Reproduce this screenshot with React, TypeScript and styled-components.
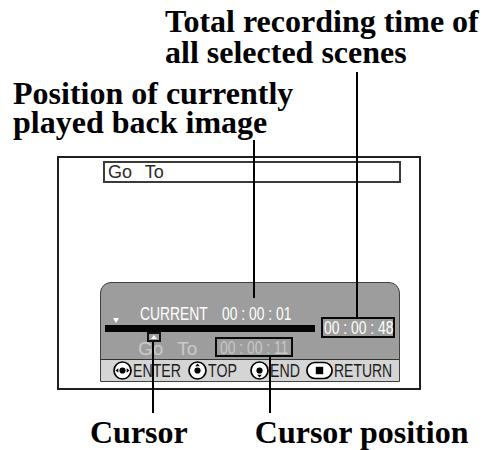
import React from "react";
import styled, { createGlobalStyle } from "styled-components";

const Global = createGlobalStyle`
  html, body { margin: 0; padding: 0; background: #ffffff; }
  body { font-family: "Liberation Sans", Arial, sans-serif; }
`;

const Page = styled.div`
  position: relative;
  width: 489px;
  height: 450px;
  overflow: hidden;
  background: #ffffff;
  padding-top: 6px;
  box-sizing: border-box;
`;

const Caption = styled.div<{ $left: number; $top: number; $lh: number }>`
  margin-left: ${(p) => p.$left}px;
  margin-top: ${(p) => p.$top}px;
  font-family: "Liberation Serif", "Times New Roman", serif;
  font-weight: bold;
  font-size: 32px;
  line-height: ${(p) => p.$lh}px;
  color: #000;
  white-space: nowrap;
`;

const Screen = styled.div`
  margin: 19px 0 0 57px;
  width: 364px;
  height: 234px;
  box-sizing: border-box;
  border: 2px solid #1e1e1e;
  display: flex;
  flex-direction: column;
  align-items: flex-start;
`;

const TitleBox = styled.div`
  margin: 3px 0 0 44px;
  width: 298px;
  height: 22px;
  box-sizing: border-box;
  border: 2px solid #3a3a3a;
  padding: 0 0 0 3px;
  font-size: 18px;
  line-height: 18px;
  color: #2a2a2a;
  word-spacing: 8px;
`;

const Panel = styled.div`
  margin: 99px 0 0 41px;
  width: 300px;
  height: 100px;
  box-sizing: border-box;
  border: 1px solid #404040;
  border-radius: 11px 11px 0 0;
  background: #9d9d9d;
  display: flex;
  flex-direction: column;
`;

const Main = styled.div`
  display: flex;
  align-items: flex-start;
  padding: 22px 0 0 4px;
  height: 54px;
  box-sizing: content-box;
`;

const Track = styled.div`
  width: 210px;
  display: flex;
  flex-direction: column;
`;

/* condensed text: the glyphs are squeezed to the width of the reference's narrow face */
const Cond = styled.span<{ $w: number; $s: number }>`
  display: inline-block;
  width: ${(p) => p.$w}px;
  white-space: pre;
  & > span {
    display: inline-block;
    transform: scaleX(${(p) => p.$s});
    transform-origin: 0 50%;
  }
`;

const InfoLine = styled.div`
  height: 20px;
  display: flex;
  align-items: flex-start;
  font-size: 18px;
  line-height: 19px;
  color: #ffffff;
`;

const Marker = styled.span`
  width: 0;
  height: 0;
  margin: 13px 0 0 8px;
  border-left: 3px solid transparent;
  border-right: 3px solid transparent;
  border-top: 5px solid #ffffff;
`;

const Gap = styled.span<{ $w: number }>`
  display: inline-block;
  width: ${(p) => p.$w}px;
`;

const Bar = styled.div`
  height: 7px;
  background: #050505;
`;

const CursorRow = styled.div`
  position: relative;
  height: 27px;
  display: flex;
  align-items: flex-start;
`;

const Cursor = styled.div`
  position: absolute;
  left: 42px;
  top: 0;
  width: 14px;
  height: 10px;
  box-sizing: border-box;
  border: 2px solid #111;
  background: #9d9d9d;
  display: flex;
  align-items: center;
  justify-content: center;
  &::after {
    content: "";
    width: 0;
    height: 0;
    border-left: 3px solid transparent;
    border-right: 3px solid transparent;
    border-bottom: 4px solid #ffffff;
  }
`;

const GoTo = styled.span`
  margin: 7px 0 0 33px;
  font-size: 19px;
  line-height: 19px;
  color: #cacaca;
  word-spacing: 9px;
  white-space: pre;
`;

const TimeBox = styled.div<{ $w: number; $h: number; $color: string; $mt: number; $ml: number }>`
  margin: ${(p) => p.$mt}px 0 0 ${(p) => p.$ml}px;
  width: ${(p) => p.$w}px;
  height: ${(p) => p.$h}px;
  box-sizing: border-box;
  border: 2px solid #0a0a0a;
  display: flex;
  align-items: center;
  justify-content: center;
  font-size: 18px;
  line-height: 18px;
  color: ${(p) => p.$color};
  padding-top: 1px;
`;

const KeyBar = styled.div`
  flex: 1;
  border-top: 1px solid #333;
  background: #d5d5d5;
  display: flex;
  align-items: center;
  padding-left: 12px;
  font-size: 19px;
  line-height: 19px;
  color: #1c1c1c;
`;

const Key = styled.div<{ $gap: number }>`
  display: flex;
  align-items: center;
  margin-left: ${(p) => p.$gap}px;
  svg { display: block; margin-right: 1px; }
`;

const Leader = styled.div<{ $x: number; $y: number; $h: number }>`
  position: absolute;
  left: ${(p) => p.$x}px;
  top: ${(p) => p.$y}px;
  width: 2px;
  height: ${(p) => p.$h}px;
  background: #000;
`;

const BottomLabels = styled.div`
  display: flex;
  gap: 67px;
  margin: 26px 0 0 90px;
  font-family: "Liberation Serif", "Times New Roman", serif;
  font-weight: bold;
  font-size: 32px;
  line-height: 32px;
  white-space: nowrap;
`;

const Ring = ({ children }: { children?: React.ReactNode }) => (
  <svg width="19" height="19" viewBox="0 0 19 19">
    <circle cx="9.5" cy="9.5" r="8.5" fill="#fff" stroke="#000" strokeWidth="1.7" />
    <circle cx="9.5" cy="9.5" r="3.1" fill="#000" />
    {children}
  </svg>
);

const EnterIcon = () => (
  <Ring>
    <polygon points="2.4,9.5 5.3,7.2 5.3,11.8" fill="#000" />
    <polygon points="16.6,9.5 13.7,7.2 13.7,11.8" fill="#000" />
  </Ring>
);

const TopIcon = () => (
  <Ring>
    <polygon points="9.5,2.4 7.2,5.3 11.8,5.3" fill="#000" />
  </Ring>
);

const EndIcon = () => (
  <Ring>
    <polygon points="9.5,16.6 7.2,13.7 11.8,13.7" fill="#000" />
  </Ring>
);

const ReturnIcon = () => (
  <svg width="27" height="19" viewBox="0 0 27 19">
    <rect x="0.9" y="1.5" width="25.2" height="16" rx="8" fill="#fff" stroke="#000" strokeWidth="1.7" />
    <rect x="9.8" y="5.8" width="7.4" height="7.4" fill="#000" />
  </svg>
);

const C = ({ w, s, children }: { w: number; s: number; children: string }) => (
  <Cond $w={w} $s={s}>
    <span>{children}</span>
  </Cond>
);

export default function App() {
  return (
    <>
      <Global />
      <Page>
        <Caption $left={165} $top={0} $lh={31}>
          Total recording time of
          <br />
          all selected scenes
        </Caption>
        <Caption $left={13} $top={11} $lh={29}>
          Position of currently
          <br />
          played back image
        </Caption>
        <Screen>
          <TitleBox>Go To</TitleBox>
          <Panel>
            <Main>
              <Track>
                <InfoLine>
                  <Marker />
                  <Gap $w={21} />
                  <C w={68} s={0.77}>CURRENT</C>
                  <Gap $w={14} />
                  <C w={69} s={0.77}>00 : 00 : 01</C>
                </InfoLine>
                <Bar />
                <CursorRow>
                  <Cursor />
                  <GoTo>Go To</GoTo>
                  <TimeBox $w={78} $h={20} $color="#c8c8c8" $mt={5} $ml={18}>
                    <C w={69} s={0.77}>00 : 00 : 11</C>
                  </TimeBox>
                </CursorRow>
              </Track>
              <TimeBox $w={74} $h={21} $color="#ffffff" $mt={12} $ml={6}>
                <C w={69} s={0.77}>00 : 00 : 48</C>
              </TimeBox>
            </Main>
            <KeyBar>
              <Key $gap={0}>
                <EnterIcon />
                <C w={48} s={0.745}>ENTER</C>
              </Key>
              <Key $gap={7}>
                <TopIcon />
                <C w={29} s={0.745}>TOP</C>
              </Key>
              <Key $gap={13}>
                <EndIcon />
                <C w={30} s={0.745}>END</C>
              </Key>
              <Key $gap={6}>
                <ReturnIcon />
                <C w={58} s={0.735}>RETURN</C>
              </Key>
            </KeyBar>
          </Panel>
        </Screen>
        <BottomLabels>
          <span>Cursor</span>
          <span>Cursor position</span>
        </BottomLabels>
        <Leader $x={253} $y={140} $h={158} />
        <Leader $x={356} $y={72} $h={245} />
        <Leader $x={152} $y={342} $h={71} />
        <Leader $x={269} $y={357} $h={56} />
      </Page>
    </>
  );
}
